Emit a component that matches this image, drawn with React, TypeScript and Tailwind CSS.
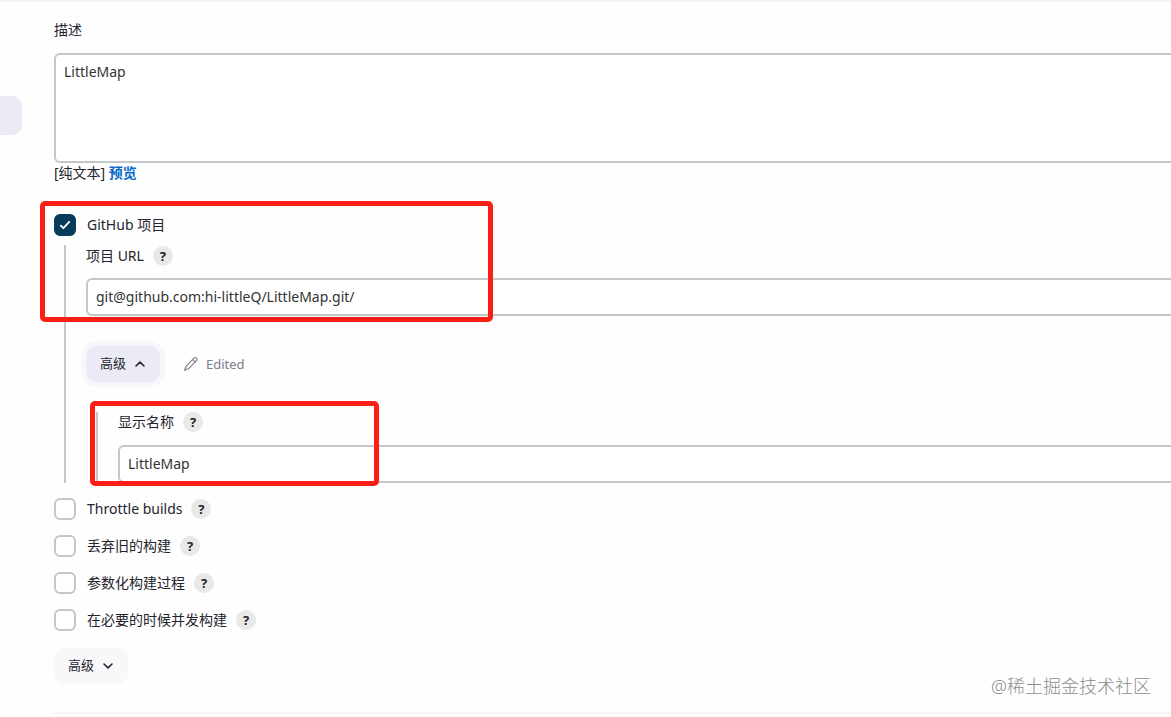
import { useState } from "react";
import type { ReactNode } from "react";

const fieldClass =
  "block w-full rounded-l-md border-2 border-r-0 border-[#c3c7ca] bg-white px-2 text-sm leading-5 text-[#333] outline-none";

const checkboxOptions = [
  { id: "throttle", label: "Throttle builds" },
  { id: "discard", label: "丢弃旧的构建" },
  { id: "params", label: "参数化构建过程" },
  { id: "concurrent", label: "在必要的时候并发构建" },
];

function HelpButton({ label }: { label: string }) {
  return (
    <button
      type="button"
      aria-label={`帮助: ${label}`}
      className="flex h-5 w-5 items-center justify-center rounded-full bg-[#e8e8e8] text-[13px] leading-5 font-bold text-[#222]"
    >
      ?
    </button>
  );
}

function FieldLabel({ id, children }: { id: string; children: string }) {
  return (
    <div className="flex items-center gap-[9px]">
      <label htmlFor={id} className="text-sm leading-5">
        {children}
      </label>
      <HelpButton label={children} />
    </div>
  );
}

interface CheckboxRowProps {
  id: string;
  label: string;
  defaultChecked?: boolean;
  help?: boolean;
}

function CheckboxRow({ id, label, defaultChecked, help }: CheckboxRowProps) {
  return (
    <div className="flex h-[22px] items-center">
      <span className="grid h-[22px] w-[22px] place-items-center">
        <input
          id={id}
          type="checkbox"
          defaultChecked={defaultChecked}
          className="peer col-start-1 row-start-1 h-[22px] w-[22px] appearance-none rounded-md border-2 border-[#c3c7ca] bg-white checked:border-[#073b5c] checked:bg-[#073b5c]"
        />
        <svg
          viewBox="0 0 22 22"
          className="pointer-events-none invisible col-start-1 row-start-1 h-[22px] w-[22px] peer-checked:visible"
          fill="none"
          stroke="#fff"
          strokeWidth="1.8"
          strokeLinecap="round"
          strokeLinejoin="round"
        >
          <path d="M6.8 11.6l2.6 2.6 5.8-6.4" />
        </svg>
      </span>
      <label htmlFor={id} className="ml-[11px] text-sm leading-5">
        {label}
      </label>
      {help && (
        <span className="ml-[9px]">
          <HelpButton label={label} />
        </span>
      )}
    </div>
  );
}

function Chevron({ up }: { up?: boolean }) {
  return (
    <svg
      viewBox="0 0 12 12"
      className="h-3 w-3"
      fill="none"
      stroke="currentColor"
      strokeWidth="1.6"
      strokeLinecap="round"
      strokeLinejoin="round"
    >
      <path d={up ? "M2 8L6 4.2 10 8" : "M2 4L6 7.8 10 4"} />
    </svg>
  );
}

function PencilIcon() {
  return (
    <svg
      viewBox="0 0 16 16"
      className="h-4 w-4"
      fill="none"
      stroke="currentColor"
      strokeWidth="1.1"
      strokeLinecap="round"
      strokeLinejoin="round"
    >
      <path d="M10.9 2.2a1.7 1.7 0 0 1 2.6 2.5L5.4 12.8 1.6 14.2 3 10.3z" />
      <path d="M9.6 3.6l2.6 2.6" />
    </svg>
  );
}

// 红色标注框
function Highlight({ className }: { className: string }) {
  return (
    <div
      className={`pointer-events-none absolute rounded-[5px] border-5 border-[#fb1e14] ${className}`}
    />
  );
}

function Nested({ children }: { children: ReactNode }) {
  return (
    <div className="ml-[10px] border-l-2 border-[#c3c7ca] pl-5">{children}</div>
  );
}

export default function App() {
  const [advancedOpen, setAdvancedOpen] = useState(true);

  return (
    <div className="relative flex min-h-screen overflow-hidden border-t-2 border-[#f4f4f4] bg-[#fefefe] font-['Noto_Sans','Noto_Sans_CJK_SC',sans-serif] text-[#24242c]">
      <aside className="w-[54px] shrink-0 pt-[94px]">
        <div className="h-[39px] w-[22px] rounded-r-[10px] bg-[#ebebf5]" />
      </aside>

      <main className="min-w-0 flex-1 pt-[18px]">
        <label htmlFor="description" className="block text-sm leading-5">
          描述
        </label>
        <textarea
          id="description"
          defaultValue="LittleMap"
          className={`${fieldClass} mt-[13px] h-[110px] resize-none py-[7px]`}
        />
        <p className="text-sm leading-5">
          [纯文本]{" "}
          <a href="#preview" className="font-bold text-[#0b6ac8]">
            预览
          </a>
        </p>

        <section className="mt-[31px]">
          <div className="relative">
            <CheckboxRow id="github" label="GitHub 项目" defaultChecked />
            <Highlight className="-top-[13px] -left-[14px] h-[121px] w-[453px]" />
          </div>
          <div className="mt-[9px]">
            <Nested>
              <div className="pt-px">
                <FieldLabel id="project-url">项目 URL</FieldLabel>
              </div>
              <input
                id="project-url"
                type="text"
                defaultValue="git@github.com:hi-littleQ/LittleMap.git/"
                className={`${fieldClass} mt-3 h-[38px] pb-0.5`}
              />

              <div className="mt-[30px] flex items-center">
                <button
                  type="button"
                  aria-expanded={advancedOpen}
                  onClick={() => setAdvancedOpen(!advancedOpen)}
                  className="flex h-9 w-[74px] items-center justify-center gap-2 rounded-[10px] bg-[#ebebf5] text-[13px] ring-5 ring-[#f8f8fc]"
                >
                  高级
                  <Chevron up={advancedOpen} />
                </button>
                <span className="ml-[23px] flex items-center gap-[7px] text-[13px] leading-5 text-[#7c7c8a]">
                  <PencilIcon />
                  Edited
                </span>
              </div>

              {advancedOpen && (
                <div className="relative mt-[30px]">
                  <Nested>
                    <FieldLabel id="display-name">显示名称</FieldLabel>
                    <input
                      id="display-name"
                      type="text"
                      defaultValue="LittleMap"
                      className={`${fieldClass} mt-[13px] h-[38px] pb-0.5`}
                    />
                  </Nested>
                  <Highlight className="-top-[11px] left-1 h-[85px] w-[289px]" />
                </div>
              )}
            </Nested>
          </div>
        </section>

        <div className="mt-[15px] flex flex-col gap-[15px]">
          {checkboxOptions.map((o) => (
            <CheckboxRow key={o.id} id={o.id} label={o.label} help />
          ))}
        </div>

        <button
          type="button"
          className="mt-[17px] flex h-9 w-[74px] items-center justify-center gap-2 rounded-[10px] bg-[#f8f8fb] text-[13px]"
        >
          高级
          <Chevron />
        </button>
        <hr className="mt-7 border-t-2 border-[#f5f5f5]" />
      </main>

      <div className="pointer-events-none absolute right-5 bottom-[17px] text-lg leading-7 font-light text-[#8c8c8c]">
        @稀土掘金技术社区
      </div>
    </div>
  );
}
